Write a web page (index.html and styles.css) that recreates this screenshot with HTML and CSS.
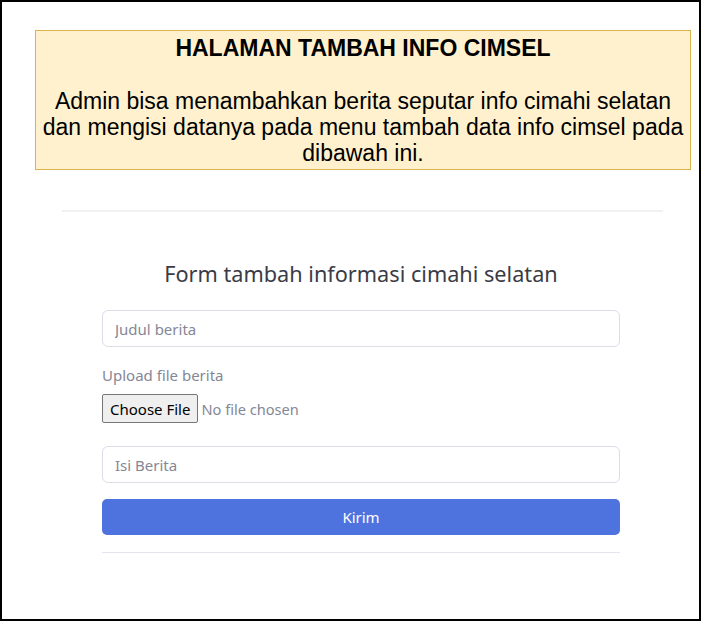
FILE: index.html
```html
<!DOCTYPE html>
<html lang="id">
<head>
<meta charset="utf-8">
<title>Tambah Info Cimsel</title>
<link rel="stylesheet" href="styles.css">
</head>
<body>
<div class="frame">
  <div class="alert">
    <h3 class="alert-title">HALAMAN TAMBAH INFO CIMSEL</h3>
    <p class="alert-text">Admin bisa menambahkan berita seputar info cimahi selatan dan mengisi datanya pada menu tambah data info cimsel pada dibawah ini.</p>
  </div>
  <hr class="divider">
  <div class="form-wrap">
    <h1 class="form-title">Form tambah informasi cimahi selatan</h1>
    <form class="form">
      <input class="field" type="text" placeholder="Judul berita">
      <div class="upload">
        <label class="upload-label">Upload file berita</label>
        <div class="file-row">
          <span class="file-btn">Choose File</span>
          <span class="file-text">No file chosen</span>
        </div>
      </div>
      <input class="field" type="text" placeholder="Isi Berita">
      <button class="submit" type="button">Kirim</button>
    </form>
    <hr class="divider-bottom">
  </div>
</div>
</body>
</html>
```
FILE: styles.css
```css
* { box-sizing: border-box; }
html, body { margin: 0; padding: 0; background: #fff; }
.frame {
  width: 701px;
  height: 621px;
  border: 2px solid #000;
  overflow: hidden;
  font-family: "Noto Sans", "Open Sans", sans-serif;
}
.alert {
  margin: 28px 0 0 33px;
  width: 656px;
  background: #fff1cd;
  border: 1px solid #d9b44a;
  padding: 4px 2px 3px;
  text-align: center;
  font-family: "Liberation Sans", Arial, sans-serif;
  color: #000;
}
.alert-title {
  margin: 0;
  font-size: 23px;
  line-height: 26px;
  font-weight: bold;
}
.alert-text {
  margin: 27px 0 0;
  font-size: 23px;
  line-height: 26px;
}
.divider {
  margin: 40px 0 0 60px;
  width: 601px;
  border: 0;
  border-top: 2px solid #f1f1f3;
}
.form-wrap {
  width: 518px;
  margin: 0 0 0 100px;
}
.form-title {
  margin: 47px 0 0;
  font-weight: 400;
  font-size: 21.7px;
  line-height: 30px;
  color: #3a3b45;
  text-align: center;
}
.form {
  margin-top: 21px;
  display: flex;
  flex-direction: column;
}
.field {
  display: block;
  width: 518px;
  height: 37px;
  border: 1px solid #dddde9;
  border-radius: 6px;
  padding: 0 12px;
  font-family: inherit;
  font-size: 15px;
  color: #6e707e;
  outline: none;
}
.field::placeholder { color: #858796; }
.upload {
  margin-top: 18px;
  display: flex;
  flex-direction: column;
  gap: 9px;
}
.upload-label {
  font-size: 15px;
  line-height: 20px;
  color: #858796;
}
.file-row {
  display: flex;
  align-items: center;
  gap: 3px;
  margin-bottom: 23px;
}
.file-btn {
  display: inline-flex;
  align-items: center;
  height: 29px;
  padding: 0 7px;
  background: #efefef;
  border: 1px solid #767676;
  border-radius: 2px;
  font-size: 15px;
  color: #000;
}
.file-text {
  font-size: 14.6px;
  color: #858796;
}
.submit {
  margin-top: 16px;
  height: 36px;
  width: 518px;
  border: 0;
  border-radius: 5px;
  background: #4e73df;
  color: #fff;
  font-family: inherit;
  font-size: 15px;
}
.divider-bottom {
  margin: 17px 0 0;
  border: 0;
  border-top: 1px solid #e3e6f0;
}
```
